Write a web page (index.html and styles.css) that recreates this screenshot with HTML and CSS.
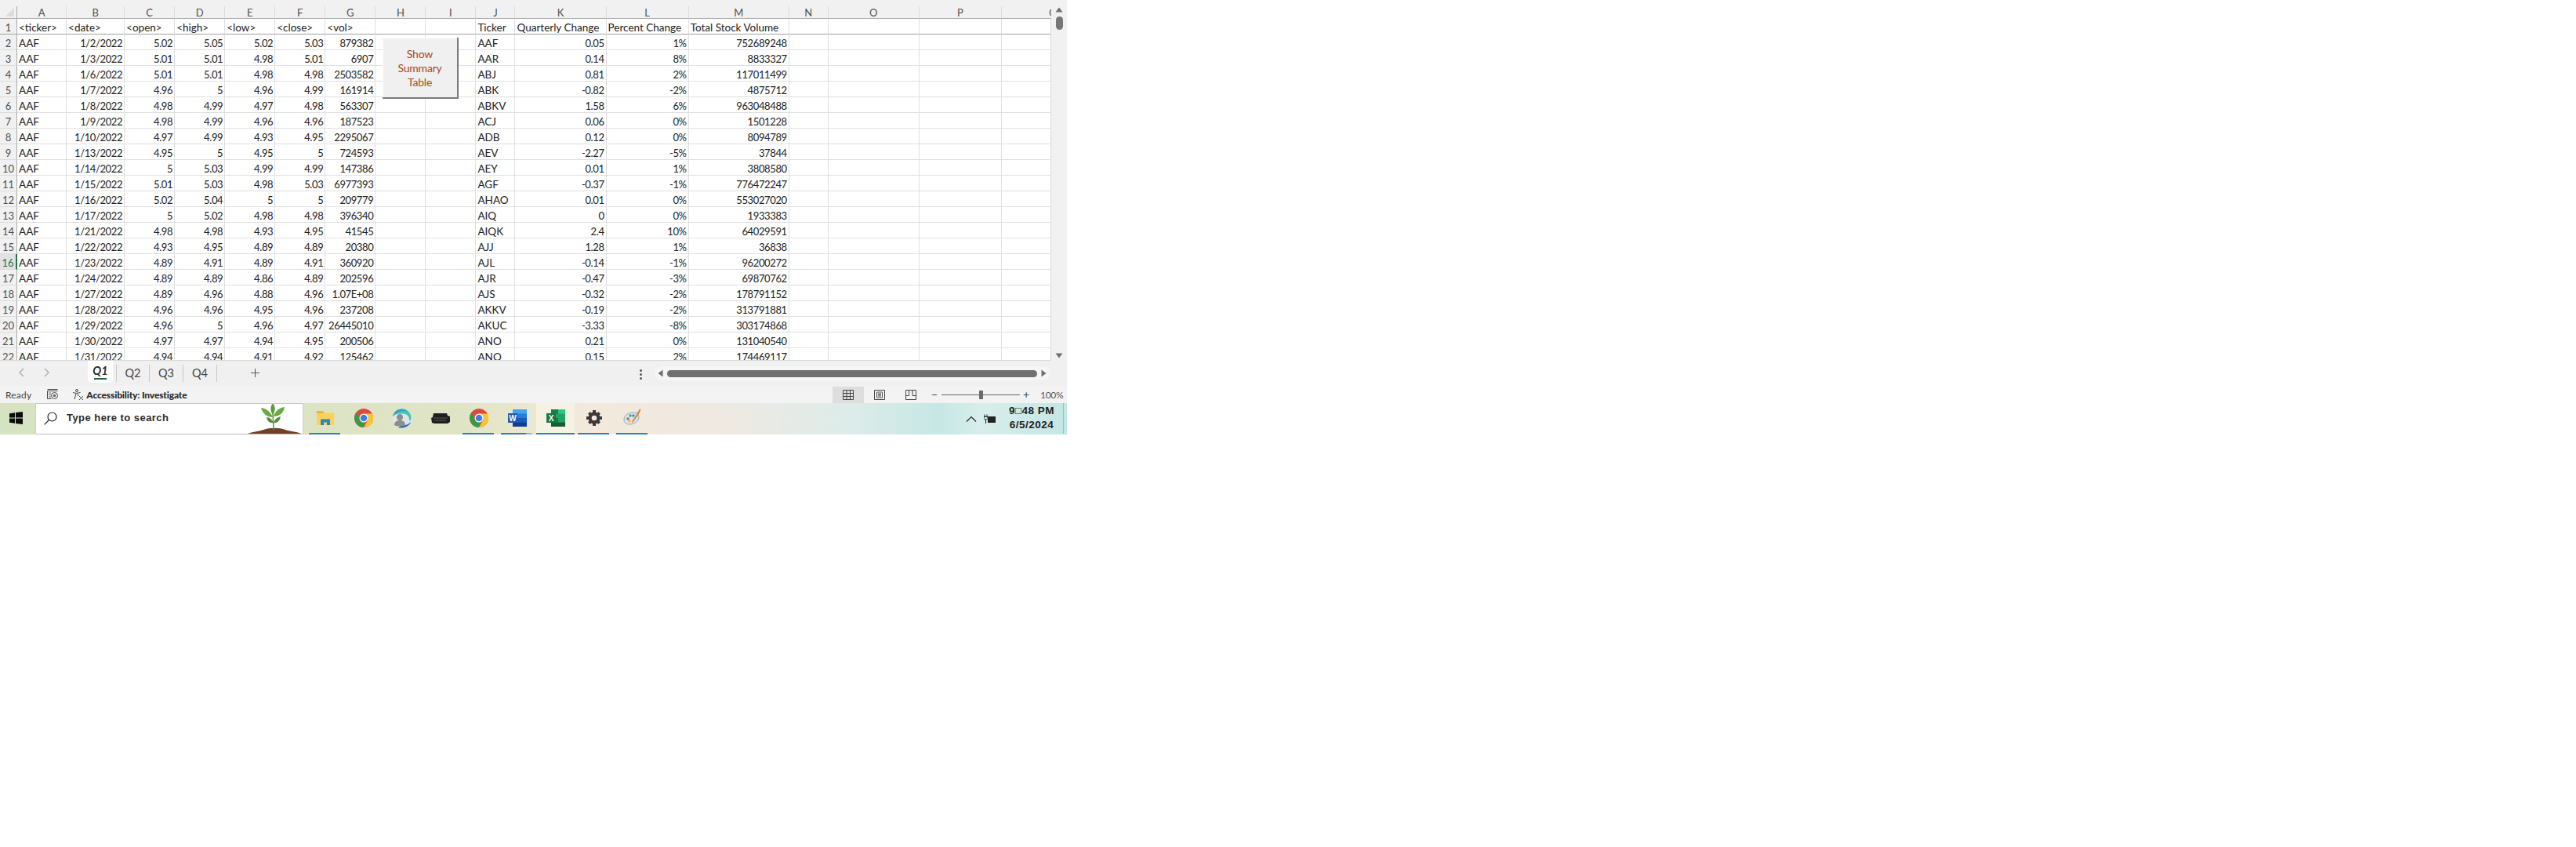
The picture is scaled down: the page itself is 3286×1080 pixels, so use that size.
FILE: index.html
```html
<!DOCTYPE html>
<html lang="en">
<head>
<meta charset="utf-8">
<title>Stock data - Excel</title>
<link rel="stylesheet" href="styles.css">
</head>
<body>
<div class="app">
  <div class="sheet-area">
    <div class="grid">
      <table class="cells">
        <colgroup>
          <col class="c-rh"><col class="c-a"><col class="c-b"><col class="c-64"><col class="c-64"><col class="c-64"><col class="c-64"><col class="c-64"><col class="c-64"><col class="c-64"><col class="c-j"><col class="c-k"><col class="c-l"><col class="c-m"><col class="c-n"><col class="c-o"><col class="c-p"><col class="c-q">
        </colgroup>
        <thead>
          <tr>
            <th class="corner"><span class="tri"></span></th><th>A</th><th>B</th><th>C</th><th>D</th><th>E</th><th>F</th><th>G</th><th>H</th><th>I</th><th>J</th><th>K</th><th>L</th><th>M</th><th>N</th><th>O</th><th>P</th><th class="clip">Q</th>
          </tr>
        </thead>
        <tbody>
          <tr class="head"><th>1</th><td>&lt;ticker&gt;</td><td>&lt;date&gt;</td><td>&lt;open&gt;</td><td>&lt;high&gt;</td><td>&lt;low&gt;</td><td>&lt;close&gt;</td><td>&lt;vol&gt;</td><td></td><td></td><td>Ticker</td><td>Quarterly Change</td><td>Percent Change</td><td>Total Stock Volume</td><td></td><td></td><td></td><td></td></tr>
          <tr><th>2</th><td>AAF</td><td class="n">1/2/2022</td><td class="n">5.02</td><td class="n">5.05</td><td class="n">5.02</td><td class="n">5.03</td><td class="n">879382</td><td></td><td></td><td>AAF</td><td class="n">0.05</td><td class="n">1%</td><td class="n">752689248</td><td></td><td></td><td></td><td></td></tr>
          <tr><th>3</th><td>AAF</td><td class="n">1/3/2022</td><td class="n">5.01</td><td class="n">5.01</td><td class="n">4.98</td><td class="n">5.01</td><td class="n">6907</td><td></td><td></td><td>AAR</td><td class="n">0.14</td><td class="n">8%</td><td class="n">8833327</td><td></td><td></td><td></td><td></td></tr>
          <tr><th>4</th><td>AAF</td><td class="n">1/6/2022</td><td class="n">5.01</td><td class="n">5.01</td><td class="n">4.98</td><td class="n">4.98</td><td class="n">2503582</td><td></td><td></td><td>ABJ</td><td class="n">0.81</td><td class="n">2%</td><td class="n">117011499</td><td></td><td></td><td></td><td></td></tr>
          <tr><th>5</th><td>AAF</td><td class="n">1/7/2022</td><td class="n">4.96</td><td class="n">5</td><td class="n">4.96</td><td class="n">4.99</td><td class="n">161914</td><td></td><td></td><td>ABK</td><td class="n">-0.82</td><td class="n">-2%</td><td class="n">4875712</td><td></td><td></td><td></td><td></td></tr>
          <tr><th>6</th><td>AAF</td><td class="n">1/8/2022</td><td class="n">4.98</td><td class="n">4.99</td><td class="n">4.97</td><td class="n">4.98</td><td class="n">563307</td><td></td><td></td><td>ABKV</td><td class="n">1.58</td><td class="n">6%</td><td class="n">963048488</td><td></td><td></td><td></td><td></td></tr>
          <tr><th>7</th><td>AAF</td><td class="n">1/9/2022</td><td class="n">4.98</td><td class="n">4.99</td><td class="n">4.96</td><td class="n">4.96</td><td class="n">187523</td><td></td><td></td><td>ACJ</td><td class="n">0.06</td><td class="n">0%</td><td class="n">1501228</td><td></td><td></td><td></td><td></td></tr>
          <tr><th>8</th><td>AAF</td><td class="n">1/10/2022</td><td class="n">4.97</td><td class="n">4.99</td><td class="n">4.93</td><td class="n">4.95</td><td class="n">2295067</td><td></td><td></td><td>ADB</td><td class="n">0.12</td><td class="n">0%</td><td class="n">8094789</td><td></td><td></td><td></td><td></td></tr>
          <tr><th>9</th><td>AAF</td><td class="n">1/13/2022</td><td class="n">4.95</td><td class="n">5</td><td class="n">4.95</td><td class="n">5</td><td class="n">724593</td><td></td><td></td><td>AEV</td><td class="n">-2.27</td><td class="n">-5%</td><td class="n">37844</td><td></td><td></td><td></td><td></td></tr>
          <tr><th>10</th><td>AAF</td><td class="n">1/14/2022</td><td class="n">5</td><td class="n">5.03</td><td class="n">4.99</td><td class="n">4.99</td><td class="n">147386</td><td></td><td></td><td>AEY</td><td class="n">0.01</td><td class="n">1%</td><td class="n">3808580</td><td></td><td></td><td></td><td></td></tr>
          <tr><th>11</th><td>AAF</td><td class="n">1/15/2022</td><td class="n">5.01</td><td class="n">5.03</td><td class="n">4.98</td><td class="n">5.03</td><td class="n">6977393</td><td></td><td></td><td>AGF</td><td class="n">-0.37</td><td class="n">-1%</td><td class="n">776472247</td><td></td><td></td><td></td><td></td></tr>
          <tr><th>12</th><td>AAF</td><td class="n">1/16/2022</td><td class="n">5.02</td><td class="n">5.04</td><td class="n">5</td><td class="n">5</td><td class="n">209779</td><td></td><td></td><td>AHAO</td><td class="n">0.01</td><td class="n">0%</td><td class="n">553027020</td><td></td><td></td><td></td><td></td></tr>
          <tr><th>13</th><td>AAF</td><td class="n">1/17/2022</td><td class="n">5</td><td class="n">5.02</td><td class="n">4.98</td><td class="n">4.98</td><td class="n">396340</td><td></td><td></td><td>AIQ</td><td class="n">0</td><td class="n">0%</td><td class="n">1933383</td><td></td><td></td><td></td><td></td></tr>
          <tr><th>14</th><td>AAF</td><td class="n">1/21/2022</td><td class="n">4.98</td><td class="n">4.98</td><td class="n">4.93</td><td class="n">4.95</td><td class="n">41545</td><td></td><td></td><td>AIQK</td><td class="n">2.4</td><td class="n">10%</td><td class="n">64029591</td><td></td><td></td><td></td><td></td></tr>
          <tr><th>15</th><td>AAF</td><td class="n">1/22/2022</td><td class="n">4.93</td><td class="n">4.95</td><td class="n">4.89</td><td class="n">4.89</td><td class="n">20380</td><td></td><td></td><td>AJJ</td><td class="n">1.28</td><td class="n">1%</td><td class="n">36838</td><td></td><td></td><td></td><td></td></tr>
          <tr class="sel"><th>16</th><td>AAF</td><td class="n">1/23/2022</td><td class="n">4.89</td><td class="n">4.91</td><td class="n">4.89</td><td class="n">4.91</td><td class="n">360920</td><td></td><td></td><td>AJL</td><td class="n">-0.14</td><td class="n">-1%</td><td class="n">96200272</td><td></td><td></td><td></td><td></td></tr>
          <tr><th>17</th><td>AAF</td><td class="n">1/24/2022</td><td class="n">4.89</td><td class="n">4.89</td><td class="n">4.86</td><td class="n">4.89</td><td class="n">202596</td><td></td><td></td><td>AJR</td><td class="n">-0.47</td><td class="n">-3%</td><td class="n">69870762</td><td></td><td></td><td></td><td></td></tr>
          <tr><th>18</th><td>AAF</td><td class="n">1/27/2022</td><td class="n">4.89</td><td class="n">4.96</td><td class="n">4.88</td><td class="n">4.96</td><td class="n">1.07E+08</td><td></td><td></td><td>AJS</td><td class="n">-0.32</td><td class="n">-2%</td><td class="n">178791152</td><td></td><td></td><td></td><td></td></tr>
          <tr><th>19</th><td>AAF</td><td class="n">1/28/2022</td><td class="n">4.96</td><td class="n">4.96</td><td class="n">4.95</td><td class="n">4.96</td><td class="n">237208</td><td></td><td></td><td>AKKV</td><td class="n">-0.19</td><td class="n">-2%</td><td class="n">313791881</td><td></td><td></td><td></td><td></td></tr>
          <tr><th>20</th><td>AAF</td><td class="n">1/29/2022</td><td class="n">4.96</td><td class="n">5</td><td class="n">4.96</td><td class="n">4.97</td><td class="n">26445010</td><td></td><td></td><td>AKUC</td><td class="n">-3.33</td><td class="n">-8%</td><td class="n">303174868</td><td></td><td></td><td></td><td></td></tr>
          <tr><th>21</th><td>AAF</td><td class="n">1/30/2022</td><td class="n">4.97</td><td class="n">4.97</td><td class="n">4.94</td><td class="n">4.95</td><td class="n">200506</td><td></td><td></td><td>ANO</td><td class="n">0.21</td><td class="n">0%</td><td class="n">131040540</td><td></td><td></td><td></td><td></td></tr>
          <tr><th>22</th><td>AAF</td><td class="n">1/31/2022</td><td class="n">4.94</td><td class="n">4.94</td><td class="n">4.91</td><td class="n">4.92</td><td class="n">125462</td><td></td><td></td><td>ANQ</td><td class="n">0.15</td><td class="n">2%</td><td class="n">174469117</td><td></td><td></td><td></td><td></td></tr>
        </tbody>
      </table>
      <div class="macro-btn"><span>Show</span><span>Summary</span><span>Table</span></div>
    </div>
    <div class="vscroll">
      <div class="vtop">
        <svg class="arrow" width="10" height="7" viewBox="0 0 10 7"><path d="M5 0.5 9.5 6.5H0.5Z" fill="#6f6f6f"/></svg>
        <div class="vthumb"></div>
      </div>
      <svg class="arrow" width="10" height="7" viewBox="0 0 10 7"><path d="M5 6.5 9.5 0.5H0.5Z" fill="#6f6f6f"/></svg>
    </div>
  </div>

  <div class="tabbar">
    <div class="nav">
      <svg width="9" height="12" viewBox="0 0 9 12"><path d="M7 1 2 6l5 5" fill="none" stroke="#b4b4b4" stroke-width="1.6"/></svg>
      <svg width="9" height="12" viewBox="0 0 9 12"><path d="M2 1l5 5-5 5" fill="none" stroke="#b4b4b4" stroke-width="1.6"/></svg>
    </div>
    <div class="tabs">
      <div class="tab active"><span>Q1</span><i class="tab-line"></i></div>
      <div class="tab">Q2</div>
      <div class="tab">Q3</div>
      <div class="tab">Q4</div>
    </div>
    <svg class="add" width="13" height="13" viewBox="0 0 13 13"><path d="M6.5 1v11M1 6.5h11" stroke="#555" stroke-width="1"/></svg>
    <div class="dots"><i></i><i></i><i></i></div>
    <div class="hscroll">
      <svg width="7" height="10" viewBox="0 0 7 10"><path d="M0.5 5 6.5 0.5V9.5Z" fill="#6f6f6f"/></svg>
      <div class="hthumb"></div>
      <svg width="7" height="10" viewBox="0 0 7 10"><path d="M6.5 5 0.5 0.5V9.5Z" fill="#6f6f6f"/></svg>
    </div>
  </div>

  <div class="status">
    <span class="ready">Ready</span>
    <svg class="macro-ic" width="15" height="14" viewBox="0 0 15 14"><path d="M.5.5h13M.5 2.5h13M.5 2.5v10h5" fill="none" stroke="#444"/><path d="M2 5h3M2 7.5h3M2 10h3" stroke="#666"/><circle cx="9.5" cy="8.5" r="4" fill="none" stroke="#444"/><circle cx="9.5" cy="8.5" r="1.8" fill="#666"/></svg>
    <svg class="acc-ic" width="15" height="15" viewBox="0 0 15 15"><circle cx="6" cy="2" r="1.5" fill="none" stroke="#444"/><path d="M1 4.5c3 1 6 1 9.500 0M5 6 3 13M7 6l1 3" fill="none" stroke="#444"/><path d="M9 9l5 5M14 9l-5 5" stroke="#444"/></svg>
    <span class="acc">Accessibility: Investigate</span>
    <div class="views">
      <div class="view on"><svg width="14" height="13" viewBox="0 0 14 13"><path d="M.5.5h13v12H.5zM.5 4.500h13M.5 8.500h13M5 .5v12M9.500 .5v12" fill="none" stroke="#444"/></svg></div>
      <div class="view"><svg width="14" height="13" viewBox="0 0 14 13"><path d="M.5.5h13v12H.5z" fill="none" stroke="#444"/><path d="M3.500 3h7v7h-7zM5 5h4M5 6.500h4M5 8h4" fill="none" stroke="#555"/></svg></div>
      <div class="view"><svg width="14" height="13" viewBox="0 0 14 13"><path d="M.5.5h13v12H.5zM.5 7.500h4V.5M9 .5v7h4.500M4.500 7.500" fill="none" stroke="#444"/></svg></div>
    </div>
    <div class="zoom">
      <span class="z-sign">−</span>
      <div class="slider"><i></i></div>
      <span class="z-sign">+</span>
      <span class="pct">100%</span>
    </div>
  </div>

  <div class="taskbar">
    <div class="start">
      <svg width="17" height="16" viewBox="0 0 17 16"><path d="M0 2.300 7 1.300V7.500H0ZM8 1.100 17 0V7.500H8ZM0 8.500H7V14.700L0 13.700ZM8 8.500H17V16L8 14.900Z" fill="#0b0b0b"/></svg>
    </div>
    <div class="search">
      <svg class="search-ic" width="17" height="17" viewBox="0 0 17 17"><circle cx="10.500" cy="6.500" r="5.500" fill="none" stroke="#222" stroke-width="1.200"/><path d="M6.500 10.500 .7 16.300" stroke="#222" stroke-width="1.200"/></svg>
      <span class="search-text">Type here to search</span>
      <svg class="plant" width="68" height="39" viewBox="0 0 68 39">
        <path d="M0 39C8 36 14 36 20 34c8-3 20-3 28 0 6 2 14 2 20 5Z" fill="#6f4128"/>
        <path d="M33 34C33 26 32 20 32 12" stroke="#5d9a3d" stroke-width="1.500" fill="none"/>
        <path d="M32 0c3 4 4 9 0 15-4-6-3-11 0-15Z" fill="#5c9c3c"/>
        <path d="M17 6c7 1 12 5 15 12-8 0-13-5-15-12ZM47 5c-7 1-12 5-14 12 8 0 13-5 14-12Z" fill="#68a845"/>
        <path d="M24 18c4 0 7 3 9 7-5 1-8-2-9-7ZM42 17c-4 1-7 3-9 8 5 1 8-3 9-8Z" fill="#4f8f35"/>
      </svg>
    </div>
    <div class="apps">
      <div class="app-ic run">
        <svg width="22" height="20" viewBox="0 0 22 20"><path d="M0 1.500h8l2 3H0Z" fill="#d9a520"/><path d="M0 3.500h22V19H0Z" fill="#fad356"/><path d="M5 19v-7.500h12V19h-4v-3.500H9V19Z" fill="#2b86c8"/></svg>
      </div>
      <div class="app-ic">
        <svg width="24" height="24" viewBox="0 0 24 24"><circle cx="12" cy="12" r="12" fill="#dd4b3e"/><path d="M12 12 1.700 18A12 12 0 0 0 12 24Z" fill="#2f9e48"/><path d="M1.700 18A12 12 0 0 1 2 5.500L7 13Z" fill="#2f9e48"/><path d="M12 6.500h10.700A12 12 0 0 1 12 24l5-9Z" fill="#f5c631"/><circle cx="12" cy="12" r="5.500" fill="#fff"/><circle cx="12" cy="12" r="4.300" fill="#3d7fe6"/></svg>
      </div>
      <div class="app-ic">
        <svg width="25" height="25" viewBox="0 0 25 25"><circle cx="12.500" cy="12.500" r="12" fill="#dfe6ea"/><path d="M1 10C3 3 8 .5 13 .5c6 0 11.500 5 11.500 11 0 2-1 3.500-2.500 4.500 1-6-3-9.500-8-9.500C8 6.500 4 7 1 10Z" fill="#43c4b4"/><path d="M1 10C3 3 8 .5 13 .5c3 0 5 1 7 3C14 1.500 6 3.500 1 10Z" fill="#2f9fd0"/><path d="M8 24c6 2 14-1 16-7-3 3-7 5-10 4-3 0-4 2-6 3Z" fill="#1f6fb5"/><circle cx="10" cy="11" r="4" fill="#8d8d8d"/><path d="M3 21c0-4 3-6 7-6s7 2 7 6c-4 2-10 2-14 0Z" fill="#8d8d8d"/></svg>
      </div>
      <div class="app-ic">
        <svg width="24" height="16" viewBox="0 0 24 16"><path d="M3 2h17l1 3 3 1v7l-3 2H4l-3-1L0 8l2-1Z" fill="#1e1e1e"/><path d="M3 8h18M4 11h15" stroke="#5a5a5a"/></svg>
      </div>
      <div class="app-ic run">
        <svg width="24" height="24" viewBox="0 0 24 24"><circle cx="12" cy="12" r="12" fill="#dd4b3e"/><path d="M12 12 1.700 18A12 12 0 0 0 12 24Z" fill="#2f9e48"/><path d="M1.700 18A12 12 0 0 1 2 5.500L7 13Z" fill="#2f9e48"/><path d="M12 6.500h10.700A12 12 0 0 1 12 24l5-9Z" fill="#f5c631"/><circle cx="12" cy="12" r="5.500" fill="#fff"/><circle cx="12" cy="12" r="4.300" fill="#3d7fe6"/></svg>
      </div>
      <div class="app-ic run split">
        <svg width="24" height="22" viewBox="0 0 24 22"><path d="M6 0h18v22H6Z" fill="#2b7cd3"/><path d="M6 0h18v5.500H6Z" fill="#41a5ee"/><path d="M6 11h18v5.500H6Z" fill="#185abd"/><path d="M6 16.500h18V22H6Z" fill="#103f91"/><path d="M0 5h12v12H0Z" fill="#1a5cbf"/><text x="6" y="14.500" class="ic-letter" text-anchor="middle">W</text></svg>
      </div>
      <div class="app-ic run active">
        <svg width="24" height="22" viewBox="0 0 24 22"><path d="M6 0h18v22H6Z" fill="#21a366"/><path d="M6 0h9v5.500H6Z" fill="#1a7d4c"/><path d="M15 0h9v5.500h-9Z" fill="#33c481"/><path d="M6 11h9v5.500H6Z" fill="#107c41"/><path d="M6 16.500h18V22H6Z" fill="#185c37"/><path d="M0 5h12v12H0Z" fill="#107c41"/><text x="6" y="14.500" class="ic-letter" text-anchor="middle">X</text></svg>
      </div>
      <div class="app-ic run">
        <svg width="20" height="20" viewBox="0 0 20 20"><path d="M10 2.500a7.500 7.500 0 1 0 0 15 7.500 7.500 0 0 0 0-15Zm0 4.200a3.300 3.300 0 1 1 0 6.600 3.300 3.300 0 0 1 0-6.600Z" fill="#3a3a3a" fill-rule="evenodd"/><path d="M8 0h4v4H8ZM8 16h4v4H8ZM0 8h4v4H0ZM16 8h4v4h-4ZM2 4.800 4.800 2l2.500 2.500-2.800 2.800ZM12.700 15.500l2.800-2.800 2.500 2.500-2.800 2.800ZM15.200 2 18 4.800l-2.500 2.500-2.800-2.800ZM4.500 12.700l2.800 2.800L4.800 18 2 15.200Z" fill="#3a3a3a"/></svg>
      </div>
      <div class="app-ic run">
        <svg width="24" height="24" viewBox="0 0 24 24"><path d="M1 14C1 8 7 5 13 5c4 0 7 2 7 6 0 5-6 9-12 9-4 0-7-2-7-6Z" fill="#d9e6f0" stroke="#8ea6ba"/><circle cx="6" cy="13" r="1.700" fill="#d9534f"/><circle cx="9" cy="9" r="1.700" fill="#4ba34b"/><circle cx="13" cy="9" r="1.700" fill="#3f86c9"/><circle cx="8" cy="16" r="1.700" fill="#e9c23c"/><path d="M22 0c1 3-3 9-7 14l-3 4-1-1c1-3 4-6 5-8 2-4 4-8 6-9Z" fill="#d98a3d"/></svg>
      </div>
    </div>
    <div class="tray">
      <svg width="14" height="8" viewBox="0 0 14 8"><path d="M1 7.500 7 1.500l6 6" fill="none" stroke="#222" stroke-width="1.100"/></svg>
      <svg class="batt" width="16" height="12" viewBox="0 0 16 12"><path d="M1 .5v3M4 .5v3M0 3.500h5v2l-1.500 1.500h-2L0 5.500ZM2.500 7v5" fill="none" stroke="#222"/><path d="M5 3h10v8H5Z" fill="#222"/></svg>
      <div class="clock"><span>9□48 PM</span><span>6/5/2024</span></div>
      <i class="show-desk"></i>
    </div>
  </div>
</div>
</body>
</html>
```

FILE: styles.css
```css
* { box-sizing: border-box; }
html, body { margin: 0; padding: 0; background: #fff; }
body { font-family: "Lato", "Liberation Sans", sans-serif; color: #1f1f1f; }

.app { width: 1361px; height: 554px; display: flex; flex-direction: column; overflow: hidden; }

/* sheet */
.sheet-area { display: flex; height: 460px; background: #f1f1f1; }
.grid { position: relative; width: 1341px; height: 460px; overflow: hidden; padding-top: 8px; border-bottom: 1px solid #d8d8d8; }
.cells { border-collapse: separate; border-spacing: 0; table-layout: fixed; width: 1341px; font-size: 13.500px; background: #fff; }
.c-rh { width: 22px; }
.c-a { width: 63px; }
.c-b { width: 74px; }
.c-64 { width: 64px; }
.c-j { width: 50px; }
.c-k { width: 116px; }
.c-l { width: 105px; }
.c-m { width: 128px; }
.c-n { width: 50px; }
.c-o { width: 116px; }
.c-p { width: 105px; }
.c-q { width: 63px; }

thead th { height: 16px; padding: 0; font-weight: 400; font-size: 13px; line-height: 14px; color: #505050; text-align: center; background: #f1f1f1; border-right: 1px solid #dcdcdc; border-bottom: 1px solid #a9a9a9; }
thead th.clip { text-align: right; padding-right: 0; border-right: 0; overflow: hidden; text-indent: 60px; white-space: nowrap; }
thead th.corner { position: relative; border-right: 1px solid #a9a9a9; }
.tri { position: absolute; right: 3px; bottom: 2px; width: 0; height: 0; border-left: 11px solid transparent; border-bottom: 11px solid #dcdcdc; }

tbody th { height: 20px; padding: 3px 0 0; font-weight: 400; font-size: 13px; line-height: 16px; text-align: center; color: #505050; background: #f1f1f1; border-right: 1px solid #a9a9a9; border-bottom: 1px solid #dcdcdc; }
tbody td { height: 20px; padding: 3px 0 0 2px; white-space: nowrap; overflow: visible; color: #222; border-right: 1px solid #e0e0e0; border-bottom: 1px solid #e0e0e0; line-height: 16px; }
tbody td:last-child { border-right: 1px solid #d8d8d8; }
tbody td.n { text-align: right; padding: 3px 2px 0 0; font-size: 13px; letter-spacing: -.38px; }
.head th, .head td { border-bottom-color: #a0a0a0; }
.sel th { color: #217346; background: #e2e2e2; border-right: 2px solid #217346; }

.macro-btn { position: absolute; left: 488px; top: 48px; width: 97px; height: 78px; padding-top: 2px; display: flex; flex-direction: column; align-items: center; justify-content: center; background: #f0f0f0; border-right: 2px solid #7b7b7b; border-bottom: 2px solid #7b7b7b; font-size: 14px; line-height: 18px; letter-spacing: -.2px; color: #a6491f; box-shadow: inset 1px 1px 0 #fff; }

/* scrollbars */
.vscroll { width: 20px; display: flex; flex-direction: column; align-items: center; justify-content: space-between; padding: 9px 0 3px; }
.vtop { display: flex; flex-direction: column; align-items: center; gap: 5px; }
.vthumb { width: 9px; height: 17px; border-radius: 5px; background: #777; }

/* tab bar */
.tabbar { height: 32px; background: #f0f0f0; display: flex; align-items: flex-start; position: relative; }
.nav { width: 112px; height: 30px; display: flex; gap: 23px; align-items: center; padding-left: 23px; }
.tabs { display: flex; height: 28px; }
.tab { position: relative; width: 43px; height: 22px; margin-top: 5px; font-size: 14.500px; line-height: 22px; text-align: center; color: #444; border-right: 1px solid #c8c8c8; }
.tab.active { width: 32px; height: 28px; margin: 0 4px 0 0; background: #fff; border: 0; border-radius: 0 0 5px 5px; font-style: italic; font-weight: 700; color: #2c2c2c; line-height: 26px; }
.tab-line { position: absolute; left: 8px; right: 8px; top: 22px; height: 2px; background: #1e6b45; }
.tabs .tab:nth-child(2) { margin-left: 0; border-left: 1px solid #c8c8c8; }
.add { margin: 9px 0 0 42px; }
.dots { margin: 11px 0 0 0; position: absolute; left: 816px; top: 0; display: flex; flex-direction: column; gap: 2px; }
.dots i { width: 3px; height: 3px; border-radius: 50%; background: #555; display: block; }
.hscroll { position: absolute; left: 834px; top: 7px; width: 506px; height: 18px; border-radius: 9px; background: #f5f5f5; display: flex; align-items: center; gap: 5px; padding: 0 5px; }
.hthumb { flex: 1; height: 9px; border-radius: 5px; background: #707070; }

/* status bar */
.status { height: 22px; background: #f3f3f3; display: flex; align-items: center; font-size: 12px; color: #444; position: relative; }
.ready { margin-left: 7px; letter-spacing: .2px; }
.macro-ic { margin-left: 20px; }
.acc-ic { margin-left: 17px; }
.acc { margin-left: 3px; font-weight: 900; font-size: 12px; letter-spacing: -.15px; color: #2a2a2a; }
.views { margin-left: auto; display: flex; height: 22px; }
.view { width: 40px; height: 21px; margin-top: 1px; display: flex; align-items: center; justify-content: center; }
.view.on { background: #dedede; }
.zoom { width: 179px; height: 22px; display: flex; align-items: center; padding-left: 5px; }
.z-sign { font-size: 14px; width: 10px; text-align: center; color: #444; line-height: 14px; }
.slider { position: relative; width: 100px; height: 1px; margin: 0 3px 0 4px; background: #666; }
.slider i { position: absolute; left: 48px; top: -5px; width: 5px; height: 11px; background: #6a6a6a; }
.pct { margin-left: 13px; font-size: 12px; letter-spacing: -.3px; color: #555; }

/* taskbar */
.taskbar { height: 40px; display: flex; align-items: stretch; background: linear-gradient(90deg, #d6e3c2 0%, #dfe4c5 43%, #f3e9dc 55%, #efe9e2 68%, #dcecea 80%, #c6e7e5 88%, #d8eeec 92%, #c3e6e4 100%); }
.start { width: 45px; display: flex; align-items: center; justify-content: center; padding: 0 5px 2px 0; }
.search { position: relative; width: 342px; height: 40px; background: #fff; display: flex; align-items: center; overflow: hidden; border: 1px solid #cfcfcf; border-top-color: #c8c8c8; border-bottom: 1px solid #bcbcbc; }
.search-ic { margin: 0 0 2px 10px; }
.search-text { margin: 0 0 4px 12px; font-size: 13px; font-weight: 700; letter-spacing: .45px; color: #2b2b2b; font-family: "Liberation Sans", sans-serif; }
.plant { position: absolute; right: 2px; bottom: 0; }
.apps { display: flex; margin-left: 3px; }
.app-ic { position: relative; width: 49px; display: flex; align-items: center; justify-content: center; padding-bottom: 2px; }
.app-ic.run::after { content: ""; position: absolute; left: 4px; right: 5px; bottom: 0; height: 2px; background: #2f7fc1; }
.app-ic.split::after { background: linear-gradient(90deg, #2f7fc1 80%, #8fb6d8 80%); }
.app-ic.active { background: #f5f2e4; }
.app-ic.active::after { left: 0; right: 0; }
.ic-letter { font: 700 10px "Liberation Sans", sans-serif; fill: #fff; }
.tray { margin-left: auto; display: flex; align-items: center; position: relative; }
.tray .batt { margin-left: 9px; }
.clock { display: flex; flex-direction: column; align-items: center; width: 68px; margin: 0 11px 2px 11px; font: 700 13.500px/18px "Liberation Sans", sans-serif; letter-spacing: .5px; color: #222; }
.show-desk { position: absolute; right: 4px; top: 0; bottom: 1px; width: 1px; background: #9dbdbb; }
```
